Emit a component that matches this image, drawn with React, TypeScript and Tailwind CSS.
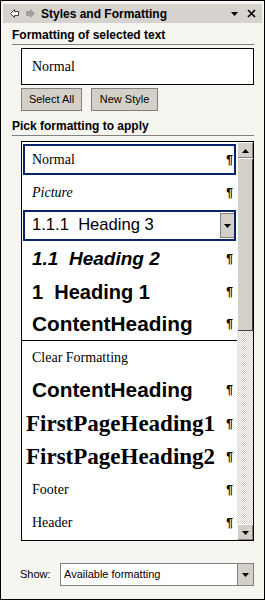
import React from "react";

const ui = { fontFamily: '"Liberation Sans", Arial, sans-serif' };

function Pil() {
  return (
    <span className="font-bold text-[12px] text-black leading-none" style={ui}>
      ¶
    </span>
  );
}

function DownTri({ cls = "" }: { cls?: string }) {
  return (
    <svg width="7" height="4" viewBox="0 0 7 4" className={cls}>
      <path d="M0 0h7L3.5 4z" fill="#000" />
    </svg>
  );
}

function UpTri() {
  return (
    <svg width="7" height="4" viewBox="0 0 7 4">
      <path d="M0 4h7L3.5 0z" fill="#000" />
    </svg>
  );
}

type Row = {
  text: string;
  cls: string;
  font: string;
  pil?: boolean;
  sel?: boolean;
  drop?: boolean;
  divider?: boolean;
  pl?: string;
};

const serif = '"Liberation Serif", "Times New Roman", serif';
const sans = '"Liberation Sans", Arial, sans-serif';

const rows: Row[] = [
  { text: "Normal", cls: "text-[14px]", font: serif, pil: true, sel: true },
  { text: "Picture", cls: "text-[14px] italic", font: serif, pil: true },
  { text: "1.1.1  Heading 3", cls: "text-[16.6px]", font: sans, sel: true, drop: true },
  { text: "1.1  Heading 2", cls: "text-[19px] font-bold italic", font: sans, pil: true },
  { text: "1  Heading 1", cls: "text-[20px] font-bold", font: sans, pil: true },
  { text: "ContentHeading", cls: "text-[20.8px] font-bold", font: sans, pil: true, divider: true },
  { text: "Clear Formatting", cls: "text-[14px]", font: serif },
  { text: "ContentHeading", cls: "text-[20.8px] font-bold", font: sans, pil: true },
  { text: "FirstPageHeading1", cls: "text-[23px] font-bold", font: serif, pil: true, pl: "pl-[4px]" },
  { text: "FirstPageHeading2", cls: "text-[23px] font-bold", font: serif, pil: true, pl: "pl-[4px]" },
  { text: "Footer", cls: "text-[14px]", font: serif, pil: true },
  { text: "Header", cls: "text-[14px]", font: serif, pil: true },
];

function ListRow({ r }: { r: Row }) {
  return (
    <div
      className={
        "h-[33px] flex items-center relative " +
        (r.divider ? "border-b border-black" : "")
      }
    >
      <div
        className={
          "absolute inset-x-[1px] top-[1px] bottom-[1px] " +
          (r.sel ? "border-2 border-[#0a246a]" : "")
        }
      />
      <div
        className={
          "flex-1 flex items-center justify-between pr-[4px] whitespace-pre text-black " +
          (r.pl ?? "pl-[10px]")
        }
      >
        <span className={r.cls + " leading-none whitespace-pre"} style={{ fontFamily: r.font }}>
          {r.text}
        </span>
        {r.pil && <Pil />}
        {r.drop && (
          <div className="w-[15px] h-[25px] mr-[-2px] bg-[#d4d0c8] border border-[#808080] flex items-center justify-center">
            <DownTri />
          </div>
        )}
      </div>
    </div>
  );
}

function ScrollBtn({ up }: { up?: boolean }) {
  return (
    <div className="h-[16px] w-[16px] bg-[#d4d0c8] border-t border-l border-white shadow-[inset_-1px_-1px_0_#808080] flex items-center justify-center">
      {up ? <UpTri /> : <DownTri />}
    </div>
  );
}

export default function App() {
  return (
    <div className="w-[266px] h-[603px] bg-white" style={ui}>
      <div className="w-[265px] h-[600px] border border-black bg-[#f6f5f0] p-[2px] flex flex-col">
        {/* title bar */}
        <div className="h-[19px] bg-[#d6d3ce] flex items-center pl-[7px] pr-[6px] mt-[1px]">
          <svg width="9" height="9" viewBox="0 0 9 9" className="mr-[7px]">
            <path d="M0.5 4.5L4.5 0.5V2.5H8.5V6.5H4.5V8.5Z" fill="#fff" stroke="#404040" strokeWidth="1" />
          </svg>
          <svg width="9" height="9" viewBox="0 0 9 9" className="mr-[6px]">
            <path d="M8.5 4.5L4.5 0.5V2.5H0.5V6.5H4.5V8.5Z" fill="#a0a0a0" stroke="#a0a0a0" strokeWidth="1" />
          </svg>
          <span className="font-bold text-[12px] text-black flex-1">Styles and Formatting</span>
          <DownTri cls="mr-[9px]" />
          <svg width="9" height="9" viewBox="0 0 9 9">
            <path d="M1 1L8 8M8 1L1 8" stroke="#000" strokeWidth="1.6" />
          </svg>
        </div>

        <div className="pl-[9px] pr-[8px] flex flex-col flex-1">
          <div className="mt-[5px] font-bold text-[12px] text-black leading-[14px] border-b border-[#808080] pb-[2px]">
            Formatting of selected text
          </div>
          <div className="ml-[9px] mt-[3px] h-[37px] border border-black bg-white flex items-center pl-[10px]">
            <span className="text-[14px] text-black" style={{ fontFamily: serif }}>
              Normal
            </span>
          </div>
          <div className="ml-[9px] mt-[3px] flex gap-[9px]">
            <div className="h-[23px] w-[61px] bg-[#d4d0c8] border border-[#808080] flex items-center justify-center text-[11px] text-black">
              Select All
            </div>
            <div className="h-[23px] w-[67px] bg-[#d4d0c8] border border-[#808080] flex items-center justify-center text-[11px] text-black">
              New Style
            </div>
          </div>
          <div className="mt-[8px] font-bold text-[12px] text-black leading-[14px] border-b border-[#808080] pb-[2px]">
            Pick formatting to apply
          </div>
          <div className="ml-[9px] mt-[5px] h-[400px] border border-black bg-white flex">
            <div className="flex-1 flex flex-col py-[1px]">
              {rows.map((r, i) => (
                <ListRow key={i} r={r} />
              ))}
            </div>
            <div className="w-[16px] flex flex-col">
              <ScrollBtn up />
              <div className="h-[173px] bg-[#d4d0c8] border-t border-l border-white shadow-[inset_-1px_-1px_0_#404040]" />
              <div className="flex-1 bg-[repeating-conic-gradient(#d4d0c8_0_25%,#ffffff_0_50%)] bg-[length:2px_2px]" />
              <ScrollBtn />
            </div>
          </div>
          <div className="mt-[22px] flex items-center">
            <span className="text-[11px] text-black w-[48px] pl-[8px]">Show:</span>
            <div className="flex-1 h-[23px] border border-[#808080] bg-white flex items-center">
              <span className="flex-1 pl-[3px] text-[11px] text-black">Available formatting</span>
              <div className="w-[16px] h-[21px] bg-[#d4d0c8] border-l border-[#808080] flex items-center justify-center">
                <DownTri />
              </div>
            </div>
          </div>
        </div>
      </div>
    </div>
  );
}
